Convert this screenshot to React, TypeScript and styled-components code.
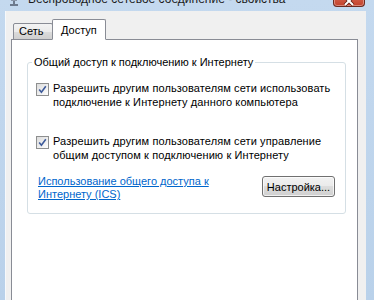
import React from 'react';
import styled, { createGlobalStyle } from 'styled-components';

const Global = createGlobalStyle`
  html, body {
    margin: 0;
    padding: 0;
    background: #bcd3ec;
  }
`;

const Window = styled.div`
  width: 374px;
  height: 300px;
  overflow: hidden;
  background: linear-gradient(180deg, #c4d9ef 0%, #b9d1ea 100%);
  font-family: "Liberation Sans", Arial, sans-serif;
  font-size: 11px;
  color: #000;
  display: flex;
  flex-direction: column;
`;

const TitleBar = styled.div`
  height: 11px;
  flex-shrink: 0;
  display: flex;
  align-items: flex-start;
  padding-left: 10px;
  position: relative;
`;

const TitleIcon = styled.svg`
  margin-top: -6px;
  flex-shrink: 0;
`;

const TitleText = styled.span`
  margin-top: -8px;
  margin-left: 10px;
  font-size: 12px;
  line-height: 14px;
  color: #1b1b1b;
  white-space: nowrap;
`;

const CloseButton = styled.div`
  position: absolute;
  left: 333px;
  top: -14px;
  width: 30px;
  height: 20px;
  border: 1px solid #6b2a20;
  border-top: none;
  border-radius: 0 0 4px 4px;
  background: linear-gradient(180deg, #e8a597 0%, #d35f4a 55%, #c2422c 100%);
  box-shadow: inset 0 0 0 1px rgba(255, 255, 255, 0.35);
  display: flex;
  justify-content: center;
  align-items: center;
`;

const Face = styled.div`
  flex: 1;
  margin: 0 8px 0 5px;
  background: #f0f0f0;
  border-left: 1px solid #f6f9fc;
  padding: 8px 8px 0 5px;
  display: flex;
  flex-direction: column;
`;

const TabStrip = styled.div`
  display: flex;
  align-items: flex-end;
  padding-left: 2px;
  position: relative;
  z-index: 1;
  margin-bottom: -1px;
`;

const Tab = styled.div<{ $active?: boolean }>`
  height: ${(p) => (p.$active ? '21px' : '17px')};
  width: ${(p) => (p.$active ? '54px' : '40px')};
  padding-left: ${(p) => (p.$active ? '8px' : '5px')};
  margin-left: ${(p) => (p.$active ? '-1px' : '0')};
  border: 1px solid #898c95;
  border-bottom: ${(p) => (p.$active ? '1px solid #fff' : '1px solid #898c95')};
  border-radius: 2px 2px 0 0;
  background: ${(p) =>
    p.$active ? '#fff' : 'linear-gradient(180deg, #f3f3f3 0%, #ebebeb 50%, #dcdcdc 51%, #cfcfcf 100%)'};
  box-sizing: border-box;
  display: flex;
  align-items: ${(p) => (p.$active ? 'flex-start' : 'flex-end')};
`;

const TabLabel = styled.span<{ $active?: boolean }>`
  line-height: 14px;
  padding-top: ${(p) => (p.$active ? '3px' : '0')};
  padding-bottom: ${(p) => (p.$active ? '0' : '1px')};
`;

const Panel = styled.div`
  flex: 1;
  background: #fff;
  border: 1px solid #898c95;
  border-bottom: none;
  padding: 15px 11px 0 15px;
`;

const Group = styled.fieldset`
  margin: 0;
  border: 1px solid #d5dfe5;
  border-radius: 3px;
  padding: 13px 10px 12px 8px;
`;

const Legend = styled.legend`
  padding: 0 2px;
  margin-left: -4px;
  line-height: 14px;
`;

const CheckRow = styled.label<{ $gap?: number }>`
  display: flex;
  align-items: flex-start;
  gap: 4px;
  line-height: 13.5px;
  letter-spacing: 0.1px;
  white-space: nowrap;
  margin-bottom: ${(p) => p.$gap ?? 0}px;
`;

const Box = styled.span`
  width: 13px;
  height: 13px;
  flex-shrink: 0;
  margin-top: 1px;
  box-sizing: border-box;
  border: 1px solid #8e8f8f;
  background: linear-gradient(135deg, #dcdcdc 0%, #fefefe 100%);
  display: flex;
  justify-content: center;
  align-items: center;
`;

const Footer = styled.div`
  display: flex;
  justify-content: space-between;
  align-items: flex-start;
  margin-top: 13px;
`;

const Link = styled.a`
  color: #0066cc;
  text-decoration: underline;
  line-height: 13px;
  margin-left: 2px;
  white-space: nowrap;
  cursor: pointer;
`;

const Button = styled.button`
  margin-top: 1px;
  width: 73px;
  height: 21px;
  padding: 0;
  font-family: inherit;
  font-size: 11px;
  color: #000;
  border: 1px solid #707070;
  border-radius: 3px;
  background: linear-gradient(180deg, #f2f2f2 0%, #ebebeb 45%, #dddddd 50%, #cfcfcf 100%);
  box-shadow: inset 0 0 0 1px rgba(255, 255, 255, 0.7);
`;

const Check = () => (
  <Box>
    <svg width="9" height="9" viewBox="0 0 9 9">
      <path d="M1.2 4.6 L3.4 7.2 L7.8 1.2" fill="none" stroke="#3d5a9a" strokeWidth="1.6" />
    </svg>
  </Box>
);

const App: React.FC = () => {
  return (
    <Window>
      <Global />
      <TitleBar>
        <TitleIcon width="8" height="12" viewBox="0 0 8 12">
          <rect x="1" y="0" width="6" height="7" fill="#8a96a8" />
          <rect x="3" y="7" width="2" height="3" fill="#6e7b8e" />
          <rect x="0" y="10" width="8" height="2" fill="#6e7b8e" />
        </TitleIcon>
        <TitleText>Беспроводное сетевое соединение - свойства</TitleText>
        <CloseButton>
          <svg width="12" height="10" viewBox="0 0 12 10" style={{ marginTop: 10 }}>
            <path d="M2 1 L10 9 M10 1 L2 9" stroke="#5a1a10" strokeWidth="3.4" />
            <path d="M2 1 L10 9 M10 1 L2 9" stroke="#fff" strokeWidth="2" />
          </svg>
        </CloseButton>
      </TitleBar>
      <Face>
        <TabStrip>
          <Tab>
            <TabLabel>Сеть</TabLabel>
          </Tab>
          <Tab $active>
            <TabLabel $active>Доступ</TabLabel>
          </Tab>
        </TabStrip>
        <Panel>
          <Group>
            <Legend>Общий доступ к подключению к Интернету</Legend>
            <CheckRow $gap={26}>
              <Check />
              <span>
                Разрешить другим пользователям сети использовать
                <br />
                подключение к Интернету данного компьютера
              </span>
            </CheckRow>
            <CheckRow>
              <Check />
              <span>
                Разрешить другим пользователям сети управление
                <br />
                общим доступом к подключению к Интернету
              </span>
            </CheckRow>
            <Footer>
              <Link>
                Использование общего доступа к
                <br />
                Интернету (ICS)
              </Link>
              <Button>Настройка...</Button>
            </Footer>
          </Group>
        </Panel>
      </Face>
    </Window>
  );
};

export default App;
